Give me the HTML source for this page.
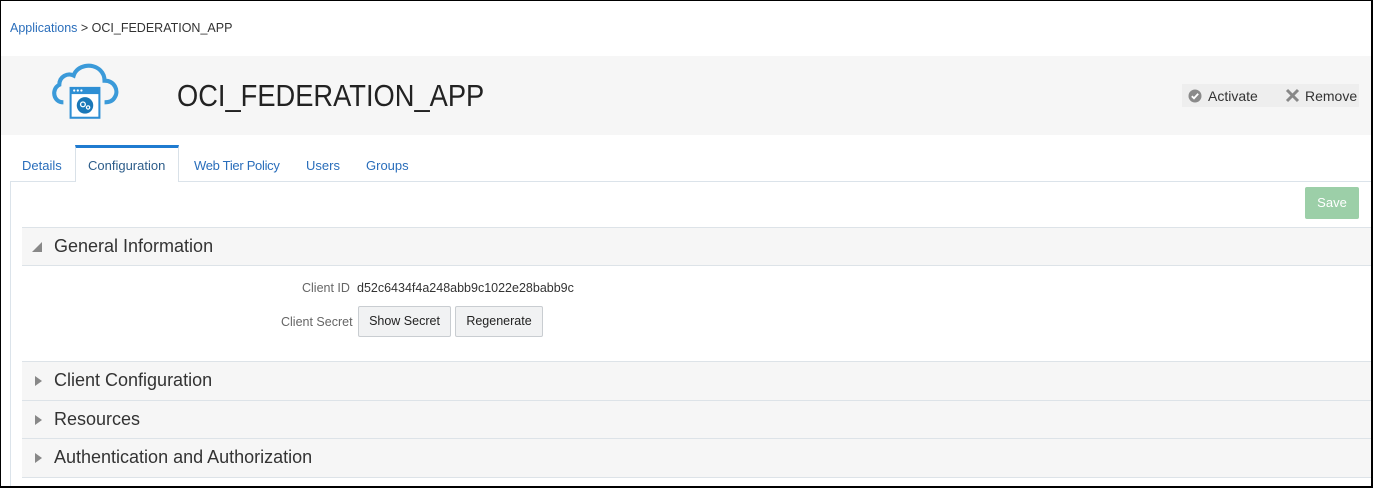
<!DOCTYPE html>
<html><head><meta charset="utf-8"><style>
*{box-sizing:border-box;margin:0;padding:0}
body{width:1373px;height:488px;overflow:hidden;background:#fff;font-family:"Liberation Sans",sans-serif;position:relative}
.frame{position:absolute;left:0;top:0;width:1373px;height:488px;border:1px solid #000;border-right-width:2px;border-bottom-width:2px;pointer-events:none;z-index:10}
.abs{position:absolute}
.bc{left:10px;top:21px;font-size:12.5px;color:#333}
.bc a{color:#2a6ebb;text-decoration:none}
.hdr{left:1px;top:56px;width:1370px;height:79px;background:#f6f6f6}
.title{left:177px;top:78px;font-size:31px;color:#222;transform:scaleX(0.88);transform-origin:0 0}
.acts{left:1182px;top:84px;width:177px;height:23px;background:#eeeeee;font-size:14px;color:#333}
.tab{top:158px;font-size:13px;color:#2a6ebb}
.ctab{left:75px;top:145px;width:104px;height:37px;border:1px solid #d9e1e8;border-top:3px solid #1f7bd0;border-bottom:none;background:#fff;z-index:2}
.panel{left:10px;top:181px;width:1362px;height:306px;border-top:1px solid #dbe3ea;border-left:1px solid #dbe3ea}
.save{left:1305px;top:187px;width:54px;height:32px;background:#9ccfa8;border-radius:2px;color:#fff;font-size:13px;text-align:center;line-height:32px}
.sec{left:22px;width:1350px;background:#f6f6f6;border-top:1px solid #dde3e8;border-bottom:1px solid #dde3e8;font-size:18px;color:#333}
.sec span{position:absolute;left:32px;top:8px}
.tri{position:absolute;left:13px;top:14px;width:0;height:0;border-top:5px solid transparent;border-bottom:5px solid transparent;border-left:7px solid #888}
.lbl{font-size:12.5px;color:#666}
.btn{top:306px;height:31px;border:1px solid #c9cdd1;background:#f1f2f3;border-radius:2px;font-size:12.5px;color:#222;text-align:center;line-height:29px}
</style></head><body>
<div class="frame"></div>
<div class="abs bc"><a>Applications</a> &gt; OCI_FEDERATION_APP</div>
<div class="abs hdr"></div>
<svg class="abs" style="left:49px;top:60px" width="72" height="62" viewBox="0 0 70 60">
<path d="M14 41 C4 41 2 28 10 24 C10 16 18 12 24 15 C27 5 42 2 50 10 C54 14 54 18 54 20 C64 20 68 30 64 36 C62 40 58 41 54 41" fill="none" stroke="#3b9ad9" stroke-width="4"/>
<rect x="20" y="26" width="30" height="31" fill="#2e8fd4"/>
<rect x="22" y="33" width="26" height="22" fill="#fff"/>
<circle cx="24.5" cy="29.5" r="1.1" fill="#fff"/><circle cx="28" cy="29.5" r="1.1" fill="#fff"/><circle cx="31.5" cy="29.5" r="1.1" fill="#fff"/>
<circle cx="35" cy="44" r="8" fill="#1a78b8"/>
<circle cx="33" cy="43" r="2.3" fill="none" stroke="#fff" stroke-width="1.3"/>
<circle cx="38" cy="46" r="1.6" fill="none" stroke="#fff" stroke-width="1.2"/>
</svg>
<div class="abs title">OCI_FEDERATION_APP</div>
<div class="abs acts">
<svg class="abs" style="left:6px;top:5px" width="14" height="14"><circle cx="7" cy="7" r="6.5" fill="#8a8a8a"/><path d="M3.8 7.2 L6 9.3 L10.2 4.8" fill="none" stroke="#fff" stroke-width="1.8"/></svg>
<span class="abs" style="left:26px;top:4px">Activate</span>
<svg class="abs" style="left:103px;top:4px" width="15" height="15"><path d="M2 2 L13 13 M13 2 L2 13" stroke="#888" stroke-width="3"/></svg>
<span class="abs" style="left:123px;top:4px">Remove</span>
</div>
<div class="abs tab" style="left:22px">Details</div>
<div class="abs ctab"></div>
<div class="abs tab" style="left:88px;color:#2d5d8a;z-index:3">Configuration</div>
<div class="abs tab" style="left:194px;letter-spacing:-0.3px">Web Tier Policy</div>
<div class="abs tab" style="left:306px">Users</div>
<div class="abs tab" style="left:366px">Groups</div>
<div class="abs panel"></div>
<div class="abs save">Save</div>
<div class="abs sec" style="top:227px;height:39px"><div class="tri" style="border:none;left:10px;top:14px;width:0;height:0;border-left:10px solid transparent;border-bottom:10px solid #888"></div><span>General Information</span></div>
<div class="abs lbl" style="left:302px;top:281px">Client ID</div>
<div class="abs" style="left:357px;top:281px;font-size:12.5px;color:#333">d52c6434f4a248abb9c1022e28babb9c</div>
<div class="abs lbl" style="left:281px;top:315px">Client Secret</div>
<div class="abs btn" style="left:358px;width:93px">Show Secret</div>
<div class="abs btn" style="left:455px;width:88px">Regenerate</div>
<div class="abs sec" style="top:361px;height:40px"><div class="tri"></div><span>Client Configuration</span></div>
<div class="abs sec" style="top:400px;height:39px"><div class="tri"></div><span>Resources</span></div>
<div class="abs sec" style="top:438px;height:40px"><div class="tri"></div><span>Authentication and Authorization</span></div>
</body></html>
